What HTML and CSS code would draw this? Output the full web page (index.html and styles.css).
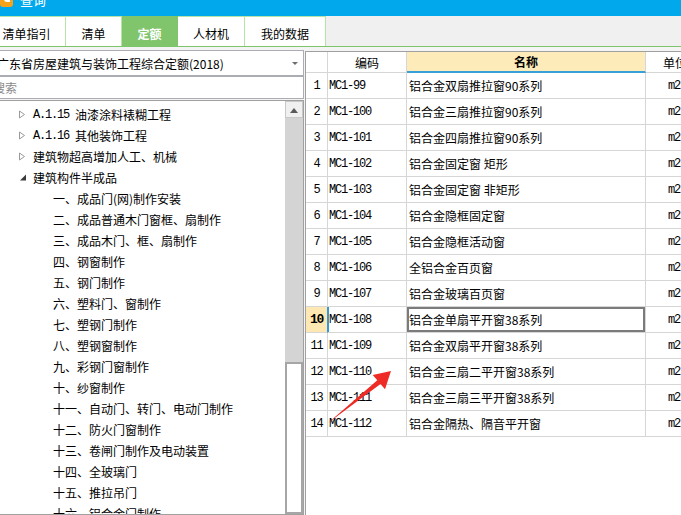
FILE: index.html
```html
<!DOCTYPE html>
<html>
<head>
<meta charset="utf-8">
<title>查询</title>
<link rel="stylesheet" href="styles.css">
</head>
<body>
<div class="titlebar"><span class="appicon"><span class="appicon-mark"></span></span><span class="title">查询</span></div>
<div class="tabs">
  <div class="tab t1">清单指引</div>
  <div class="tab t2">清单</div>
  <div class="tab t3 active">定额</div>
  <div class="tab t4">人材机</div>
  <div class="tab t5">我的数据</div>
</div>
<div class="main">
  <div class="left">
    <div class="combo"><span class="combo-text">广东省房屋建筑与装饰工程综合定额(2018)</span><span class="combo-arrow"></span></div>
    <div class="search"><span class="placeholder">搜索</span></div>
    <div class="treebox">
      <ul class="tree">
        <li class="l1"><svg class="tw" width="14" height="9" viewBox="0 0 14 9"><polygon points="0.5,1 5.5,4.5 0.5,8" fill="#fff" stroke="#9a9a9a"/></svg><span class="num">A.1.15 </span>油漆涂料裱糊工程</li>
        <li class="l1"><svg class="tw" width="14" height="9" viewBox="0 0 14 9"><polygon points="0.5,1 5.5,4.5 0.5,8" fill="#fff" stroke="#9a9a9a"/></svg><span class="num">A.1.16 </span>其他装饰工程</li>
        <li class="l1"><svg class="tw" width="14" height="9" viewBox="0 0 14 9"><polygon points="0.5,1 5.5,4.5 0.5,8" fill="#fff" stroke="#9a9a9a"/></svg>建筑物超高增加人工、机械</li>
        <li class="l1"><svg class="tw" width="14" height="9" viewBox="0 0 14 9"><polygon points="7,1.5 7,7.5 1,7.5" fill="#3a3a3a"/></svg>建筑构件半成品</li>
        <li class="l2">一、成品门(网)制作安装</li>
        <li class="l2">二、成品普通木门窗框、扇制作</li>
        <li class="l2">三、成品木门、框、扇制作</li>
        <li class="l2">四、钢窗制作</li>
        <li class="l2">五、钢门制作</li>
        <li class="l2">六、塑料门、窗制作</li>
        <li class="l2">七、塑钢门制作</li>
        <li class="l2">八、塑钢窗制作</li>
        <li class="l2">九、彩钢门窗制作</li>
        <li class="l2">十、纱窗制作</li>
        <li class="l2">十一、自动门、转门、电动门制作</li>
        <li class="l2">十二、防火门窗制作</li>
        <li class="l2">十三、卷闸门制作及电动装置</li>
        <li class="l2">十四、全玻璃门</li>
        <li class="l2">十五、推拉吊门</li>
        <li class="l2">十六、铝合金门制作</li>
      </ul>
      <div class="vscroll">
        <div class="sb-up"><span class="sb-tri"></span></div>
        <div class="sb-track"></div>
        <div class="sb-thumb"></div>
        <div class="sb-rest"></div>
      </div>
    </div>
  </div>
  <div class="right">
    <div class="grid">
      <div class="row head"><div class="cell c-no"></div><div class="cell c-code hc">编码</div><div class="cell c-name hc hsel">名称</div><div class="cell c-unit">单位</div></div>
      <div class="row"><div class="cell c-no">1</div><div class="cell c-code">MC1-99</div><div class="cell c-name">铝合金双扇推拉窗90系列</div><div class="cell c-unit">m2</div></div>
      <div class="row"><div class="cell c-no">2</div><div class="cell c-code">MC1-100</div><div class="cell c-name">铝合金三扇推拉窗90系列</div><div class="cell c-unit">m2</div></div>
      <div class="row"><div class="cell c-no">3</div><div class="cell c-code">MC1-101</div><div class="cell c-name">铝合金四扇推拉窗90系列</div><div class="cell c-unit">m2</div></div>
      <div class="row"><div class="cell c-no">4</div><div class="cell c-code">MC1-102</div><div class="cell c-name">铝合金固定窗 矩形</div><div class="cell c-unit">m2</div></div>
      <div class="row"><div class="cell c-no">5</div><div class="cell c-code">MC1-103</div><div class="cell c-name">铝合金固定窗 非矩形</div><div class="cell c-unit">m2</div></div>
      <div class="row"><div class="cell c-no">6</div><div class="cell c-code">MC1-104</div><div class="cell c-name">铝合金隐框固定窗</div><div class="cell c-unit">m2</div></div>
      <div class="row"><div class="cell c-no">7</div><div class="cell c-code">MC1-105</div><div class="cell c-name">铝合金隐框活动窗</div><div class="cell c-unit">m2</div></div>
      <div class="row"><div class="cell c-no">8</div><div class="cell c-code">MC1-106</div><div class="cell c-name">全铝合金百页窗</div><div class="cell c-unit">m2</div></div>
      <div class="row"><div class="cell c-no">9</div><div class="cell c-code">MC1-107</div><div class="cell c-name">铝合金玻璃百页窗</div><div class="cell c-unit">m2</div></div>
      <div class="row sel"><div class="cell c-no">10</div><div class="cell c-code">MC1-108</div><div class="cell c-name">铝合金单扇平开窗38系列</div><div class="cell c-unit">m2</div></div>
      <div class="row"><div class="cell c-no">11</div><div class="cell c-code">MC1-109</div><div class="cell c-name">铝合金双扇平开窗38系列</div><div class="cell c-unit">m2</div></div>
      <div class="row"><div class="cell c-no">12</div><div class="cell c-code">MC1-110</div><div class="cell c-name">铝合金三扇二平开窗38系列</div><div class="cell c-unit">m2</div></div>
      <div class="row"><div class="cell c-no">13</div><div class="cell c-code">MC1-111</div><div class="cell c-name">铝合金三扇三平开窗38系列</div><div class="cell c-unit">m2</div></div>
      <div class="row"><div class="cell c-no">14</div><div class="cell c-code">MC1-112</div><div class="cell c-name">铝合金隔热、隔音平开窗</div><div class="cell c-unit">m2</div></div>
    </div>
  </div>
</div>
<svg class="arrow" width="681" height="515" viewBox="0 0 681 515"><polygon points="328,423 377.3,380.3 372.7,375 391,371 385,389.3 380.5,384.1" fill="#ef2b25"/></svg>
</body>
</html>
```

FILE: styles.css
```css
* { box-sizing: border-box; margin: 0; padding: 0; }
html, body { width: 681px; height: 515px; overflow: hidden; }
body {
  font-family: "Noto Sans CJK SC", "Noto Sans", sans-serif;
  font-size: 12px;
  color: #000;
  background: #f0f0f0;
  position: relative;
}

/* title bar */
.titlebar {
  height: 16px;
  background: #02a8ec;
  display: flex;
  align-items: flex-start;
  overflow: hidden;
}
.appicon {
  width: 13px;
  height: 12px;
  margin-top: -5px;
  background: #f7a21b;
  border-radius: 3px;
  position: relative;
}
.appicon-mark {
  position: absolute;
  left: 4px;
  top: 3px;
  width: 6px;
  height: 4px;
  border-left: 2px solid #fff;
  border-bottom: 2px solid #fff;
  border-radius: 0 0 0 3px;
}
.title {
  color: #fff;
  font-size: 13px;
  line-height: 19px;
  margin-top: -10px;
  margin-left: 7px;
}

/* tabs */
.tabs {
  height: 31px;
  display: flex;
  margin-left: -12px;
  border-bottom: 1px solid #7cc56a;
  background: #f0f0f0;
}
.tab {
  height: 30px;
  background: #fff;
  border-top: 1px solid #b7e2aa;
  border-right: 1px solid #b7e2aa;
  display: flex;
  align-items: center;
  justify-content: center;
  padding-top: 3px;
  font-size: 12px;
}
.t1 { width: 78px; }
.t2 { width: 56px; }
.t3 { width: 56px; }
.t4 { width: 67px; }
.t5 { width: 81px; }
.tab.active {
  background: #80c56c;
  border-color: #80c56c;
  color: #fff;
  font-weight: bold;
}

/* main */
.main {
  display: flex;
  height: 468px;
  padding-top: 3px;
  background: #f4f4f4;
}
.left {
  width: 316px;
  flex: none;
  margin-left: -12px;
  display: flex;
  flex-direction: column;
}
.combo {
  height: 26px;
  border: 1px solid #abadb3;
  background: #fff;
  display: flex;
  align-items: center;
  padding-left: 8px;
}
.combo-text { white-space: nowrap; }
.combo-arrow {
  margin-left: auto;
  margin-right: 5px;
  width: 0;
  height: 0;
  border-left: 3px solid transparent;
  border-right: 3px solid transparent;
  border-top: 3px solid #6d6d6d;
}
.search {
  height: 23px;
  border: 1px solid #abadb3;
  background: #fff;
  display: flex;
  align-items: center;
  padding-left: 4px;
}
.placeholder { color: #8a8a8a; }

.treebox {
  flex: 1;
  margin-top: 1px;
  border: 1px solid #a0a0a0;
  background: #fff;
  display: flex;
  overflow: hidden;
}
.tree {
  list-style: none;
  flex: 1;
  padding-top: 3px;
}
.tree li {
  height: 21px;
  display: flex;
  align-items: center;
  white-space: nowrap;
}
.tree .l1 { padding-left: 30px; }
.tree .l2 { padding-left: 64px; }
.tw { flex: none; }
.num {
  font-family: "Liberation Mono", monospace;
  font-size: 12px;
  letter-spacing: -1.2px;
  white-space: pre;
}

.vscroll {
  width: 18px;
  flex: none;
  display: flex;
  flex-direction: column;
}
.sb-up {
  height: 17px;
  background: #f0f0f0;
  border: 1px solid #c8c8c8;
  display: flex;
  align-items: center;
  justify-content: center;
}
.sb-tri {
  width: 0;
  height: 0;
  border-left: 4px solid transparent;
  border-right: 4px solid transparent;
  border-bottom: 5px solid #5a5a5a;
  margin-top: 1px;
}
.sb-track { height: 244px; background: #d4d4d4; }
.sb-thumb {
  height: 152px;
  background: #fff;
  border: 2px solid #a6a6a6;
}
.sb-rest { flex: 1; background: #d4d4d4; }

/* right grid */
.right {
  flex: 1;
  margin-left: 1px;
  margin-top: 1px;
  border-left: 1px solid #a0a0a0;
  border-top: 1px solid #a0a0a0;
  background: #fff;
  overflow: hidden;
}
.grid { width: 420px; }
.row {
  display: grid;
  grid-template-columns: 22px 79px 239px 80px;
  height: 26px;
}
.row.head { height: 21px; }
.cell {
  border-right: 1px solid #d6d6d6;
  border-bottom: 1px solid #d6d6d6;
  display: flex;
  align-items: center;
  white-space: nowrap;
  overflow: hidden;
}
.c-no {
  justify-content: center;
  font-family: "Liberation Mono", monospace;
  font-size: 12px;
  letter-spacing: -1.2px;
}
.c-code {
  padding-left: 1px;
  font-family: "Liberation Mono", monospace;
  font-size: 12px;
  letter-spacing: -1.2px;
}
.c-name { padding-left: 2px; }
.c-unit {
  padding-left: 22px;
  font-family: "Liberation Mono", monospace;
  font-size: 12px;
  letter-spacing: -1.2px;
}
.head .cell { font-family: "Noto Sans CJK SC", sans-serif; font-size: 12px; letter-spacing: 0; }
.head .c-unit { padding-left: 17px; }
.hc { justify-content: center; padding-left: 0; }
.hsel {
  background: #fdebb9;
  border-bottom: 2px solid #38a0d8;
  font-weight: bold;
}
.sel .c-no {
  background: #fde8b4;
  font-weight: bold;
  font-size: 13px;
  border-right-color: #3598db;
}
.sel .c-code { box-shadow: inset 1px 0 #3598db; }
.sel .c-name { box-shadow: inset 0 0 0 2px #7b7b7b; }

.arrow {
  position: absolute;
  left: 0;
  top: 0;
  pointer-events: none;
}
```
